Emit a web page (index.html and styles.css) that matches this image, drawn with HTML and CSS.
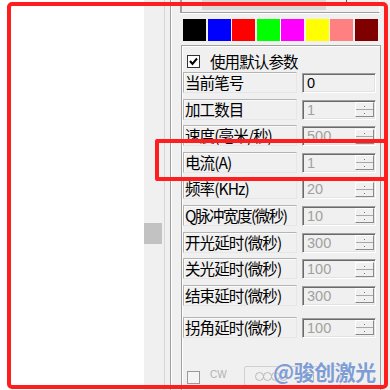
FILE: index.html
```html
<!DOCTYPE html>
<html lang="zh">
<head>
<meta charset="utf-8">
<title>参数</title>
<link rel="stylesheet" href="styles.css">
</head>
<body>
<div class="screen">
  <div class="canvas"></div>
  <div class="vscroll"><div class="thumb"></div></div>
  <div class="divider"></div>
  <div class="panel">
    <div class="slider"><span class="tick"></span><span class="bar"></span><span class="tick tall"></span></div>
    <div class="swatches">
      <span class="sw c1"></span><span class="sw c2"></span><span class="sw c3"></span><span class="sw c4"></span>
      <span class="sw c5"></span><span class="sw c6"></span><span class="sw c7"></span><span class="sw c8"></span>
    </div>
    <div class="group">
      <div class="check-row">
        <span class="checkbox"><svg width="11" height="11" viewBox="0 0 11 11"><polyline points="2,5 4.5,8 9,2.5" fill="none" stroke="#000" stroke-width="2"/></svg></span>
        <span class="check-label">使用默认参数</span>
      </div>
      <div class="params">
        <div class="label">当前笔号</div>
        <div class="input active"><span class="val">0</span></div>

        <div class="label">加工数目</div>
        <div class="input"><span class="val">1</span><span class="spin"><i></i><i></i></span></div>

        <div class="label">速度(毫米/秒)</div>
        <div class="input"><span class="val">500</span><span class="spin"><i></i><i></i></span></div>

        <div class="label">电流(A)</div>
        <div class="input"><span class="val">1</span><span class="spin"><i></i><i></i></span></div>

        <div class="label">频率(KHz)</div>
        <div class="input"><span class="val">20</span><span class="spin"><i></i><i></i></span></div>

        <div class="label tight">Q脉冲宽度(微秒)</div>
        <div class="input"><span class="val">10</span><span class="spin"><i></i><i></i></span></div>

        <div class="label">开光延时(微秒)</div>
        <div class="input"><span class="val">300</span><span class="spin"><i></i><i></i></span></div>

        <div class="label">关光延时(微秒)</div>
        <div class="input"><span class="val">100</span><span class="spin"><i></i><i></i></span></div>

        <div class="label">结束延时(微秒)</div>
        <div class="input"><span class="val">300</span><span class="spin"><i></i><i></i></span></div>

        <div class="label last">拐角延时(微秒)</div>
        <div class="input last"><span class="val">100</span><span class="spin"><i></i><i></i></span></div>
      </div>
      <div class="bottom-row">
        <span class="checkbox off"></span>
        <span class="cw">CW</span>
        <span class="dirbox"><i class="dot"></i><i class="dot"></i><i class="dot"></i><i class="dot"></i><i class="sq"></i></span>
      </div>
    </div>
  </div>

  <div class="mark outer"></div>
  <div class="mark inner"></div>
  <div class="watermark">@骏创激光</div>
</div>
</body>
</html>
```

FILE: styles.css
```css
* { box-sizing: border-box; }
html, body { margin: 0; padding: 0; background: #fff; }

.screen {
  position: relative;
  display: flex;
  width: 390px;
  height: 390px;
  overflow: hidden;
  background: #fff;
  font-family: "Noto Sans CJK SC", "Liberation Sans", sans-serif;
}

.canvas { width: 144px; flex: none; background: #fff; }

.vscroll {
  width: 21px;
  flex: none;
  background: #f0f0f0;
  border-right: 1px solid #d6d6d6;
}
.thumb {
  margin-top: 223px;
  width: 18px;
  height: 21px;
  background: #c2c2c2;
}

.divider {
  width: 6px;
  flex: none;
  background: #f0f0f0;
  border-right: 1px solid #a0a0a0;
}

.panel {
  flex: 1;
  display: flex;
  flex-direction: column;
  background: #f0f0f0;
  border-left: 1px solid #fff;
  padding-left: 8px;
}

/* top slider (cut off) */
.slider {
  flex: none;
  display: flex;
  align-items: flex-start;
  width: 200px;
  height: 13px;
  border-left: 2px solid #a0a0a0;
  border-right: 1px solid #fff;
  border-bottom: 1px solid #a0a0a0;
  box-shadow: 0 1px 0 #fff;
  padding-left: 9px;
}
.tick { width: 1px; height: 3px; margin-top: 3px; background: #555; }
.tick.tall { height: 6px; margin-top: 0; margin-left: 20px; }
.bar { width: 124px; height: 10px; margin-left: 10px; background: #d9d9d9; }

/* colour swatches */
.swatches {
  flex: none;
  display: flex;
  gap: 1.5px;
  margin-top: 6px;
  margin-left: 3px;
  height: 22px;
}
.sw { width: 23px; height: 22px; }
.c1 { background: #000000; }
.c2 { background: #0000ff; }
.c3 { background: #ff0000; }
.c4 { background: #00ff00; }
.c5 { background: #ff00ff; }
.c6 { background: #ffff00; }
.c7 { background: #ff8080; }
.c8 { background: #800000; }

/* group box */
.group {
  flex: 1;
  width: 200px;
  margin-top: 4px;
  margin-left: 1px;
  border-top: 1px solid #a0a0a0;
  border-left: 1px solid #a0a0a0;
  border-right: 1px solid #a0a0a0;
  box-shadow: inset 1px 1px 0 #fff;
  padding: 7px 0 0 1px;
}

.check-row {
  display: flex;
  align-items: center;
  height: 17px;
}
.checkbox {
  width: 13px;
  height: 13px;
  margin-left: 4px;
  border: 1px solid #333;
  background: #fff;
  display: flex;
  align-items: center;
  justify-content: center;
}
.check-label {
  margin-left: 10px;
  font-size: 15.5px;
  letter-spacing: -0.9px;
  color: #000;
  line-height: 17px;
}

.params {
  display: grid;
  grid-template-columns: 114px 74px;
  grid-auto-rows: 21px;
  column-gap: 5px;
  row-gap: 5.6px;
  margin-top: 2px;
}

.label {
  height: 21px;
  border: 1px solid;
  border-color: #b4b4b4 #e6e6e6 #e6e6e6 #b4b4b4;
  box-shadow: inset 1px 1px 0 #fafafa;
  padding-left: 1px;
  font-size: 15.5px;
  letter-spacing: -0.9px;
  line-height: 19px;
  color: #000;
  white-space: nowrap;
  overflow: hidden;
}
.label.tight { letter-spacing: -1.5px; }
.label.last { margin-top: 5.6px; }

.input {
  height: 20px;
  margin-top: 1px;
  display: flex;
  align-items: center;
  justify-content: space-between;
  border-top: 1px solid #a0a0a0;
  border-left: 1px solid #a0a0a0;
  border-right: 1px solid #fff;
  border-bottom: 1px solid #fff;
  box-shadow: inset 1px 1px 0 #696969, inset -1px -1px 0 #e3e3e3;
  background: #f0f0f0;
  padding: 1px 1px 1px 4px;
  font-family: "Liberation Sans", Arial, sans-serif;
  font-size: 14.5px;
  color: #a0a0a0;
}
.input.last { margin-top: 6.6px; }
.input.active { color: #000; }
.val { line-height: 16px; }

.spin {
  width: 19px;
  height: 15px;
  display: flex;
  flex-direction: column;
  border-top: 1px solid #fff;
  border-left: 1px solid #fff;
  border-right: 1px solid #8a8a8a;
  border-bottom: 1px solid #8a8a8a;
}
.spin i {
  flex: 1;
  position: relative;
  border-bottom: 1px solid #a8a8a8;
}
.spin i:last-child { border-bottom: none; }
.spin i::after {
  content: "";
  position: absolute;
  left: 8px;
  top: 3px;
  width: 1px;
  height: 1px;
  background: #777;
}

/* bottom row */
.bottom-row {
  display: flex;
  align-items: flex-start;
  margin-top: 34px;
  height: 20px;
}
.checkbox.off {
  margin-top: 5px;
  border-color: #9a9a9a;
  background: #f4f4f4;
}
.cw {
  margin-left: 10px;
  margin-top: 3px;
  font-family: "Liberation Sans", Arial, sans-serif;
  font-size: 10px;
  color: #b0b0b0;
}
.dirbox {
  margin-left: 17px;
  width: 97px;
  height: 20px;
  border: 1px solid #d0d0d0;
  border-radius: 2px;
  padding-left: 10px;
  display: flex;
  align-items: center;
}
.dot {
  width: 9px;
  height: 9px;
  border: 1px solid #b8b8b8;
  border-radius: 50%;
  margin-right: -1px;
}
.sq {
  width: 9px;
  height: 9px;
  border: 1px solid #b8b8b8;
  margin-left: 18px;
}

/* annotation overlays */
.mark {
  position: absolute;
  border: 4px solid #fe1e1e;
  pointer-events: none;
}
.mark.outer {
  left: 7px;
  top: 2px;
  width: 381px;
  height: 387px;
  border-radius: 5px;
}
.mark.inner {
  left: 155px;
  top: 139px;
  width: 233px;
  height: 42px;
  border-radius: 2px;
}

.watermark {
  position: absolute;
  left: 273px;
  top: 356px;
  font-size: 21px;
  font-weight: bold;
  color: #7d9dd4;
  letter-spacing: -0.5px;
  text-shadow: 0 0 1px #fff;
  white-space: nowrap;
}
```
